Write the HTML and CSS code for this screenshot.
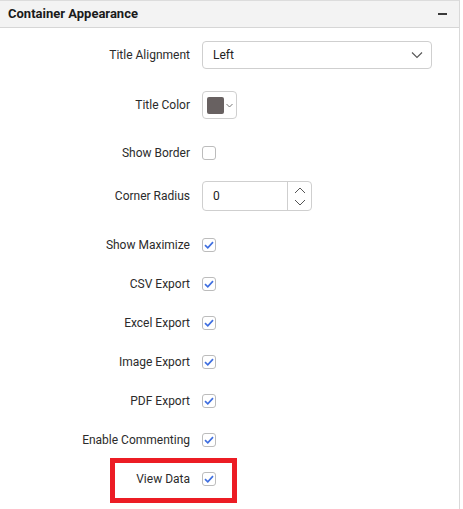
FILE: index.html
```html
<!DOCTYPE html>
<html>
<head>
<meta charset="utf-8">
<link rel="stylesheet" href="styles.css">
</head>
<body>
<div class="panel">
  <div class="header">
    <span class="title">Container Appearance</span>
    <span class="collapse"></span>
  </div>
  <div class="content">
    <div class="row">
      <label class="label">Title Alignment</label>
      <div class="select">
        <span class="select-text">Left</span>
        <svg class="chev" width="12" height="8" viewBox="0 0 12 8"><path d="M1 1.5 L6 6.5 L11 1.5" fill="none" stroke="#555" stroke-width="1.1"/></svg>
      </div>
    </div>
    <div class="row gap-22">
      <label class="label">Title Color</label>
      <div class="color">
        <span class="swatch"></span>
        <svg width="7" height="5" viewBox="0 0 7 5"><path d="M0.5 1 L3.5 4 L6.5 1" fill="none" stroke="#666" stroke-width="0.9"/></svg>
      </div>
    </div>
    <div class="row gap-27">
      <label class="label">Show Border</label>
      <span class="check"></span>
    </div>
    <div class="row gap-21">
      <label class="label">Corner Radius</label>
      <div class="numeric">
        <span class="num-text">0</span>
        <div class="spin">
          <svg width="12" height="7" viewBox="0 0 12 7"><path d="M1 6 L6 1 L11 6" fill="none" stroke="#555" stroke-width="1"/></svg>
          <svg width="12" height="7" viewBox="0 0 12 7"><path d="M1 1 L6 6 L11 1" fill="none" stroke="#555" stroke-width="1"/></svg>
        </div>
      </div>
    </div>
    <div class="row gap-27">
      <label class="label">Show Maximize</label>
      <span class="check checked"><svg width="10" height="8" viewBox="0 0 10 8"><path d="M1 4.2 L3.8 6.8 L9 1.2" fill="none" stroke="#3f6fe0" stroke-width="1.7"/></svg></span>
    </div>
    <div class="row gap-25">
      <label class="label">CSV Export</label>
      <span class="check checked"><svg width="10" height="8" viewBox="0 0 10 8"><path d="M1 4.2 L3.8 6.8 L9 1.2" fill="none" stroke="#3f6fe0" stroke-width="1.7"/></svg></span>
    </div>
    <div class="row gap-25">
      <label class="label">Excel Export</label>
      <span class="check checked"><svg width="10" height="8" viewBox="0 0 10 8"><path d="M1 4.2 L3.8 6.8 L9 1.2" fill="none" stroke="#3f6fe0" stroke-width="1.7"/></svg></span>
    </div>
    <div class="row gap-25">
      <label class="label">Image Export</label>
      <span class="check checked"><svg width="10" height="8" viewBox="0 0 10 8"><path d="M1 4.2 L3.8 6.8 L9 1.2" fill="none" stroke="#3f6fe0" stroke-width="1.7"/></svg></span>
    </div>
    <div class="row gap-25">
      <label class="label">PDF Export</label>
      <span class="check checked"><svg width="10" height="8" viewBox="0 0 10 8"><path d="M1 4.2 L3.8 6.8 L9 1.2" fill="none" stroke="#3f6fe0" stroke-width="1.7"/></svg></span>
    </div>
    <div class="row gap-25">
      <label class="label">Enable Commenting</label>
      <span class="check checked"><svg width="10" height="8" viewBox="0 0 10 8"><path d="M1 4.2 L3.8 6.8 L9 1.2" fill="none" stroke="#3f6fe0" stroke-width="1.7"/></svg></span>
    </div>
    <div class="row gap-25 highlighted">
      <label class="label">View Data</label>
      <span class="check checked"><svg width="10" height="8" viewBox="0 0 10 8"><path d="M1 4.2 L3.8 6.8 L9 1.2" fill="none" stroke="#3f6fe0" stroke-width="1.7"/></svg></span>
    </div>
  </div>
</div>
</body>
</html>
```
FILE: styles.css
```css
html, body {
  margin: 0;
  padding: 0;
  background: #ffffff;
}
body {
  font-family: Roboto, "Liberation Sans", Arial, sans-serif;
  color: #333333;
}
.panel {
  width: 459px;
  height: 509px;
  border-right: 1px solid #d9d9d9;
  box-sizing: content-box;
}
.header {
  height: 26px;
  background: #f3f3f3;
  border-top: 1px solid #dcdcdc;
  border-bottom: 1px solid #d6d6d6;
  display: flex;
  align-items: center;
  justify-content: space-between;
  padding: 0 12px 0 8px;
}
.title {
  font-size: 13px;
  font-weight: 700;
  color: #1a1a1a;
  margin-top: -1px;
}
.collapse {
  width: 9px;
  height: 2px;
  background: #3a3a3a;
}
.content {
  padding-top: 13px;
  display: flex;
  flex-direction: column;
}
.row {
  display: flex;
  align-items: center;
  position: relative;
}
.gap-21 { margin-top: 21px; }
.gap-22 { margin-top: 22px; }
.gap-25 { margin-top: 25px; }
.gap-27 { margin-top: 27px; }
.label {
  width: 190px;
  text-align: right;
  font-size: 12px;
  color: #2b2b2b;
  margin-right: 12px;
  line-height: 14px;
}
.select {
  width: 230px;
  height: 28px;
  box-sizing: border-box;
  border: 1px solid #cfcfcf;
  border-radius: 4px;
  display: flex;
  align-items: center;
  justify-content: space-between;
  padding: 0 8px 0 10px;
}
.select-text {
  font-size: 12px;
  color: #222;
}
.color {
  width: 35px;
  height: 28px;
  box-sizing: border-box;
  border: 1px solid #cfcfcf;
  border-radius: 4px;
  display: flex;
  align-items: center;
  padding-left: 4px;
  gap: 2px;
}
.swatch {
  width: 17px;
  height: 17px;
  background: #686161;
  border-radius: 2px;
}
.check {
  width: 14px;
  height: 14px;
  box-sizing: border-box;
  border: 1px solid #bcbcbc;
  border-radius: 3px;
  display: flex;
  align-items: center;
  justify-content: center;
  background: #fff;
}
.numeric {
  width: 110px;
  height: 30px;
  box-sizing: border-box;
  border: 1px solid #cfcfcf;
  border-radius: 4px;
  display: flex;
  align-items: stretch;
}
.num-text {
  flex: 1;
  font-size: 12px;
  color: #222;
  padding-left: 10px;
  display: flex;
  align-items: center;
}
.spin {
  width: 23px;
  border-left: 1px solid #cfcfcf;
  display: flex;
  flex-direction: column;
  align-items: center;
  justify-content: center;
  gap: 5px;
}
.highlighted::after {
  content: "";
  position: absolute;
  left: 110px;
  top: -14px;
  width: 127px;
  height: 45px;
  box-sizing: border-box;
  border: 5px solid #ec1c24;
}
```
